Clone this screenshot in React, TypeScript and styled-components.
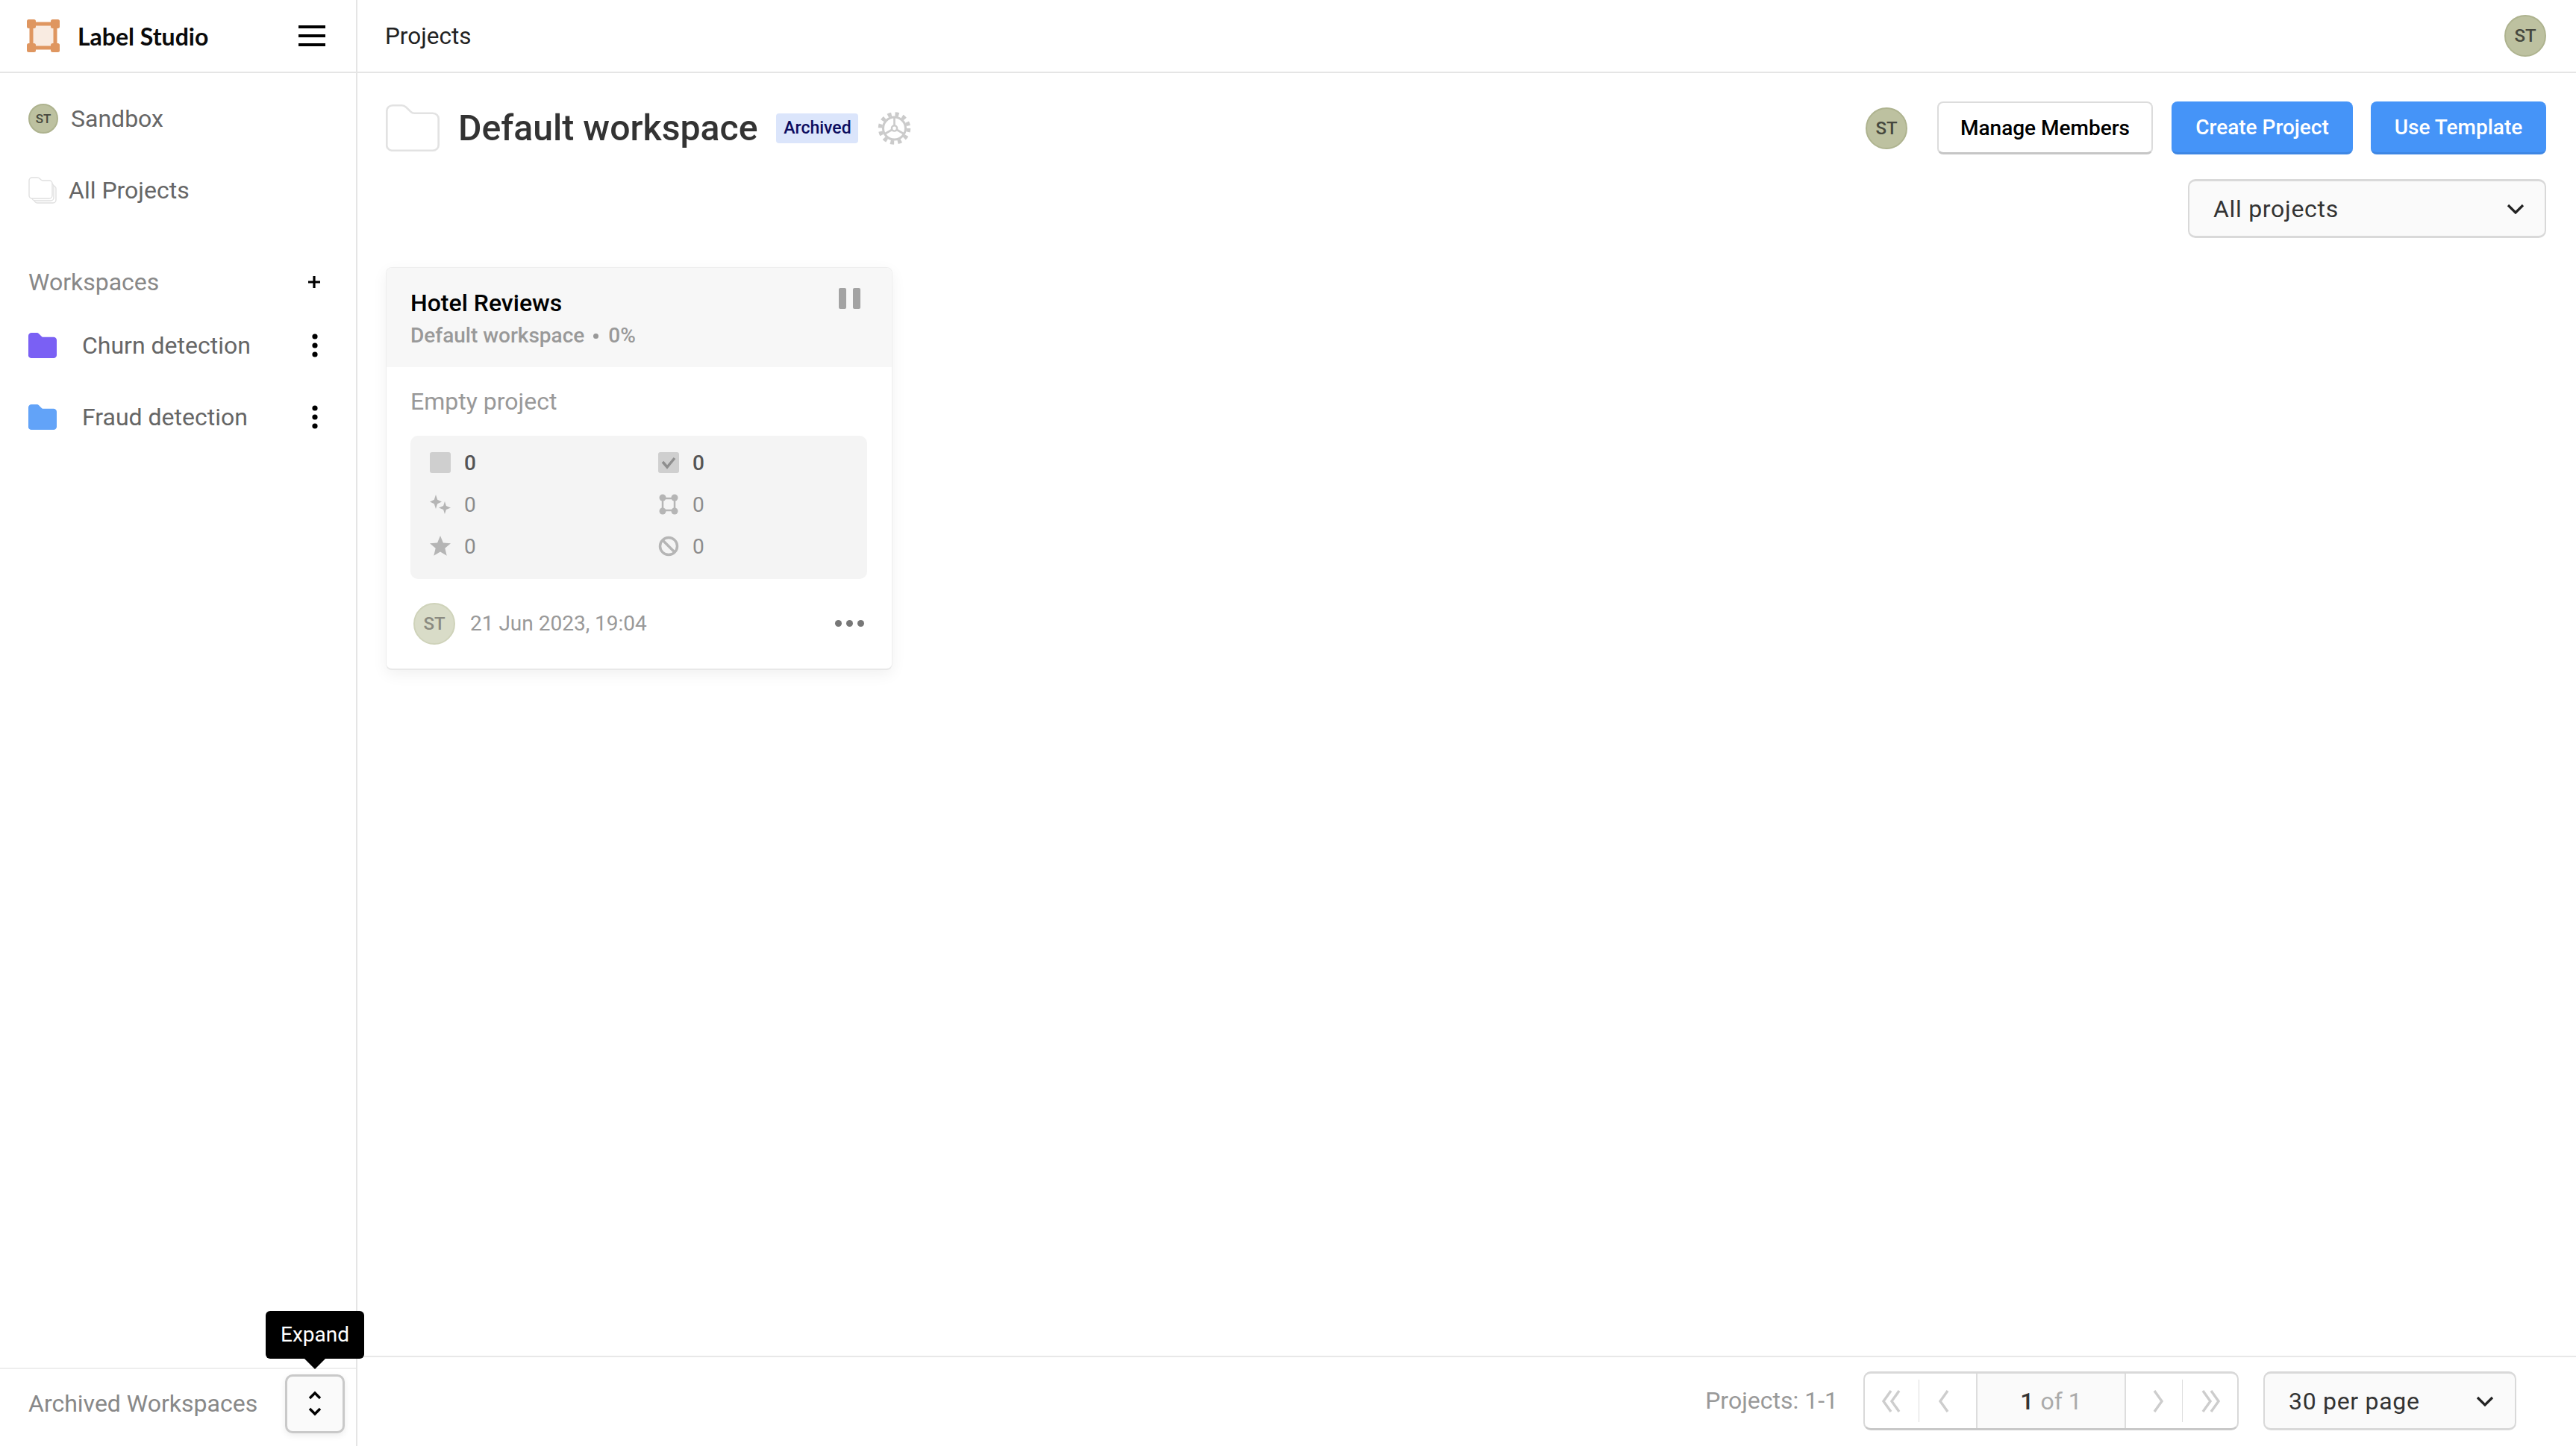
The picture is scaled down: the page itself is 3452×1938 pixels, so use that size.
import React from "react";
import styled, { createGlobalStyle } from "styled-components";

const Global = createGlobalStyle`
  html, body { margin: 0; padding: 0; height: 100%; background: #fff; overflow: hidden; }
  * { box-sizing: border-box; }
  body { font-family: Roboto, "Liberation Sans", sans-serif; color: #333; }
`;

const Page = styled.div`display: flex; flex-direction: column; height: 100vh;`;
const TopBar = styled.header`display: flex; height: 98px; border-bottom: 2px solid #e5e5e5; flex: none;`;
const Brand = styled.div`
  width: 479px; flex: none; display: flex; align-items: center; padding: 0 41px 0 36px;
  border-right: 2px solid #e5e5e5;
`;
const BrandName = styled.span`
  margin-left: 24px; flex: 1; font-family: Lato, Inter, sans-serif; font-weight: 700; font-size: 32px; color: #0a0a0a;
`;
const Burger = styled.span`display: flex; flex-direction: column; justify-content: space-between; width: 36px; height: 28px;`;
const BurgerBar = styled.i`display: block; height: 4px; background: #000;`;
const Crumbs = styled.div`flex: 1; display: flex; align-items: center; justify-content: space-between; padding: 0 40px 0 37px;`;
const Crumb = styled.span`font-size: 31.500px; color: #222;`;
const AvatarCircle = styled.span<{ $size: number; $font: number; $faded?: boolean }>`
  display: inline-flex; align-items: center; justify-content: center; flex: none; border-radius: 50%;
  width: ${p => p.$size}px; height: ${p => p.$size}px; font-size: ${p => p.$font}px; font-weight: 500;
  background: ${p => (p.$faded ? "#d9dcc8" : "#bdc1a0")}; border: 2px solid ${p => (p.$faded ? "#cfd3ba" : "#aeb38f")};
  color: ${p => (p.$faded ? "#8a8a80" : "#46483e")};
`;

const Body = styled.div`flex: 1; display: flex; min-height: 0;`;
const Sidebar = styled.aside`
  width: 479px; flex: none; display: flex; flex-direction: column; border-right: 2px solid #e5e5e5;
`;
const SideNav = styled.nav`flex: 1; padding-top: 13px;`;
const SideRow = styled.div<{ $gap: number }>`
  display: flex; align-items: center; height: 96px; padding: 0 51px 0 38px; gap: ${p => p.$gap}px;
  font-size: 32px; color: #666;
`;
const SideLabel = styled.span`flex: 1;`;
const SideHeading = styled.div`
  display: flex; align-items: center; justify-content: space-between; height: 75px; margin-top: 37px;
  padding: 0 47px 0 38px; font-size: 32px; color: #888;
`;
const SideFooter = styled.div`
  display: flex; align-items: center; justify-content: space-between; height: 105px; flex: none;
  padding: 8px 15px 19px 38px; border-top: 2px solid #eee; font-size: 32px; color: #888;
`;
const ExpandWrap = styled.div`position: relative;`;
const ExpandButton = styled.div`
  width: 80px; height: 79px; display: flex; align-items: center; justify-content: center;
  background: #fafafa; border: 3px solid #c9c9c9; border-radius: 10px; box-shadow: 0 3px 8px rgba(0,0,0,.08);
`;
const Tooltip = styled.div`
  position: absolute; left: -26px; top: -85px; width: 132px; height: 64px; background: #000; color: #fff;
  border-radius: 6px; font-size: 28px; display: flex; align-items: center; justify-content: center; z-index: 3;
  &::after {
    content: ""; position: absolute; left: 50%; bottom: -14px; margin-left: -15px;
    border-left: 15px solid transparent; border-right: 15px solid transparent; border-top: 15px solid #000;
  }
`;

const Main = styled.main`flex: 1; display: flex; flex-direction: column; min-width: 0;`;
const Content = styled.div`flex: 1; padding: 38px 40px 0 38px;`;
const HeadRow = styled.div`display: flex; align-items: center; height: 71px;`;
const Title = styled.h1`margin: 0 0 0 25px; font-size: 48.200px; font-weight: 500; color: #333;`;
const Badge = styled.span`
  margin-left: 25px; height: 40px; width: 110px; display: flex; align-items: center; justify-content: center;
  background: #dbe5fb; border-radius: 4px; color: #0b0b5e; font-size: 23px; font-weight: 500;
`;
const GearWrap = styled.span`margin-left: 26px; display: flex;`;
const HeadActions = styled.div`margin-left: auto; display: flex; align-items: center;`;
const Button = styled.button<{ $primary?: boolean; $w: number; $ml: number }>`
  width: ${p => p.$w}px; height: 71px; margin-left: ${p => p.$ml}px; border-radius: 8px; padding: 0;
  font-family: inherit; font-size: 28px; font-weight: 500;
  background: ${p => (p.$primary ? "#4594f8" : "#fff")}; color: ${p => (p.$primary ? "#fff" : "#000")};
  border: ${p => (p.$primary ? "none" : "2px solid #dcdcdc")};
  border-bottom: 3px solid ${p => (p.$primary ? "#3e87e4" : "#c6c6c6")};
`;
const FilterRow = styled.div`display: flex; justify-content: flex-end; margin-top: 33px;`;
const SelectBox = styled.div<{ $w: number; $pad: number }>`
  width: ${p => p.$w}px; height: 79px; display: flex; align-items: center; justify-content: space-between;
  padding: 0 ${p => p.$pad}px 0 32px; background: #fafafa; border: 2px solid #d9d9d9; border-top-width: 3px; border-bottom-width: 3px;
  border-radius: 10px; font-size: 32px; color: #333; letter-spacing: .7px;
`;

const Card = styled.article`
  width: 679px; height: 540px; margin-top: 39px; border: 1px solid #eee; border-bottom: 2px solid #e8e8e8; border-radius: 8px;
  background: #fff; box-shadow: 0 6px 20px rgba(0,0,0,.06); overflow: hidden;
`;
const CardHead = styled.div`
  height: 133px; background: #f7f7f7; padding: 0 42px 0 32px; display: flex; justify-content: space-between;
`;
const CardTitles = styled.div`padding-top: 29px;`;
const CardTitle = styled.div`font-size: 32px; font-weight: 500; color: #000; line-height: 36px;`;
const CardSub = styled.div`
  margin-top: 9px; font-size: 28px; font-weight: 500; color: #999; line-height: 34px; display: flex; align-items: center;
`;
const Dot = styled.i`width: 7px; height: 7px; border-radius: 50%; background: #999; margin: 0 13px 0 12px;`;
const PauseIcon = styled.div`display: flex; gap: 9px; padding-top: 27px;`;
const PauseBar = styled.i`display: block; width: 10px; height: 28px; border-radius: 2px; background: #a3a3a3;`;
const CardBody = styled.div`padding: 23px 33px 0 32px;`;
const EmptyLabel = styled.div`font-size: 32px; line-height: 46px; color: #999;`;
const StatsBox = styled.div`
  margin-top: 23px; height: 192px; padding: 8px 26px 16px; background: #f4f4f4; border-radius: 10px;
  display: grid; grid-template-columns: 306px 1fr; grid-auto-rows: 56px;
`;
const Stat = styled.div<{ $strong?: boolean }>`
  display: flex; align-items: center; gap: 18px; font-size: 28px;
  font-weight: ${p => (p.$strong ? 500 : 400)}; color: ${p => (p.$strong ? "#555" : "#8c8c8c")};
`;
const CardFoot = styled.div`display: flex; align-items: center; margin-top: 32px; padding-left: 4px; height: 55px;`;
const DateText = styled.span`margin-left: 20px; flex: 1; font-size: 28px; color: #999;`;
const MoreDots = styled.div`display: flex; gap: 6px; margin-right: 4px;`;
const MoreDot = styled.i`display: block; width: 9px; height: 9px; border-radius: 50%; background: #777;`;

const MainFoot = styled.footer`
  flex: none; height: 121px; border-top: 2px solid #e8e8e8; display: flex; align-items: flex-start; justify-content: flex-end;
  padding: 19px 80px 0 0;
`;
const ProjectsCount = styled.span`line-height: 79px; font-size: 32px; color: #999; margin-right: 34px;`;
const Pager = styled.div`
  width: 503px; height: 79px; display: flex; border: 2px solid #d9d9d9; border-top-width: 3px; border-bottom: 3px solid #c8c8c8; border-radius: 10px; overflow: hidden;
`;
const PagerBtn = styled.div<{ $w: number; $divider?: boolean }>`
  position: relative; width: ${p => p.$w}px; display: flex; align-items: center; justify-content: center; flex: none;
  ${p => p.$divider && `&::after { content: ""; position: absolute; right: 0; top: 8px; bottom: 8px; width: 1px; background: #ddd; }`}
`;
const PagerPage = styled.div`
  flex: 1; display: flex; align-items: center; justify-content: center; gap: 9px; background: #fafafa; font-size: 32px; color: #aaa;
  border-left: 2px solid #ddd; border-right: 2px solid #ddd;
`;
const PagerCurrent = styled.b`font-weight: 500; color: #333;`;
const PerPage = styled.div`margin-left: 33px;`;

const Logo = () => (
  <svg width="44" height="44" viewBox="0 0 44 44">
    <rect x="6" y="6" width="32" height="32" fill="#f9ebe1" stroke="#df9660" strokeWidth="5" />
    {[[0, 0], [32, 0], [0, 32], [32, 32]].map(([x, y]) => (
      <rect key={`${x}-${y}`} x={x} y={y} width="12" height="12" rx="2.500" fill="#df9660" />
    ))}
  </svg>
);
const FOLDER = "M3 4.500A3.500 3.500 0 0 1 6.500 1h5.700c1 0 1.800.4 2.500 1.100l3.100 3.100c.5.5 1.200.8 2 .8h11.200a3.500 3.500 0 0 1 3.500 3.500v17a3.500 3.500 0 0 1-3.500 3.500h-25A3.500 3.500 0 0 1 3 26z";
const FilledFolder = ({ color }: { color: string }) => (
  <svg width="38" height="34" viewBox="3 1 31.500 29" preserveAspectRatio="none"><path d={FOLDER} fill={color} /></svg>
);
const BigFolder = () => (
  <svg width="72" height="63" viewBox="2.400 .4 32.700 30.200" preserveAspectRatio="none">
    <path d={FOLDER} fill="#fff" stroke="#e2e2e2" strokeWidth="1.200" />
  </svg>
);
const StackFolder = () => (
  <svg width="38" height="36" viewBox="0 0 38 36" fill="#fff" stroke="#e0e0e0" strokeWidth="1.400">
    <rect x="8" y="12" width="29" height="23" rx="4" />
    <rect x="5" y="9" width="29" height="23" rx="4" />
    <path d="M1 5a4 4 0 0 1 4-4h7c1.500 0 2.500.7 3.400 1.600C16.500 3.800 17.500 5 19 5h9a4 4 0 0 1 4 4v16a4 4 0 0 1-4 4H5a4 4 0 0 1-4-4z" />
  </svg>
);
const Plus = () => (
  <svg width="18" height="18" viewBox="0 0 18 18"><path d="M9 1v16M1 9h16" stroke="#000" strokeWidth="3.200" /></svg>
);
const Kebab = () => (
  <svg width="8" height="32" viewBox="0 0 8 32" fill="#000"><circle cx="4" cy="4" r="3.600" /><circle cx="4" cy="16" r="3.600" /><circle cx="4" cy="28" r="3.600" /></svg>
);
const Gear = () => (
  <svg width="45" height="44" viewBox="0 0 45 44" fill="none" stroke="#cbcbcb">
    <circle cx="22.500" cy="22" r="15" strokeWidth="3" />
    <circle cx="22.500" cy="22" r="19" strokeWidth="5.500" strokeDasharray="5 5" />
    <path d="M22.500 7v15M22.500 22 9.500 29.500M22.500 22l13 7.500" strokeWidth="2.600" />
    <circle cx="22.500" cy="22" r="3.600" fill="#fff" strokeWidth="2.400" />
  </svg>
);
const Chevron = () => (
  <svg width="24" height="14" viewBox="0 0 24 14" fill="none"><path d="M2 2l10 10L22 2" stroke="#222" strokeWidth="3.200" /></svg>
);
const UpDown = () => (
  <svg width="18" height="34" viewBox="0 0 18 34" fill="none" stroke="#000" strokeWidth="3.400"><path d="M2 10l7-7 7 7M2 24l7 7 7-7" /></svg>
);
const Chev = ({ d, shift }: { d: string; shift: number }) => (
  <svg width="34" height="32" viewBox="0 0 34 32" fill="none" stroke="#cdcdcd" strokeWidth="3.400" style={{ marginLeft: shift }}><path d={d} /></svg>
);
const Icon28 = ({ children }: { children: React.ReactNode }) => (
  <svg width="28" height="28" viewBox="0 0 28 28" style={{ flex: "none" }}>{children}</svg>
);
const StatIcons = {
  total: <Icon28><rect width="28" height="28" rx="3" fill="#cfcfcf" /></Icon28>,
  done: <Icon28><rect width="28" height="28" rx="3" fill="#cfcfcf" /><path d="M6 13l6 7 10-12" fill="none" stroke="#8f8f8f" strokeWidth="3.500" /></Icon28>,
  spark: <Icon28><path d="M8 1l2.200 6.800L16 10.500l-5.800 2.700L8 20l-2.200-6.800L0 10.500l5.800-2.700zM20 10l1.900 6.100L28 18.500l-6.100 2.400L20 27l-1.900-6.100-6.100-2.400 6.100-2.400z" fill="#b5b5b5" /></Icon28>,
  frame: <Icon28><rect x="6" y="6" width="16" height="16" fill="none" stroke="#b5b5b5" strokeWidth="2.500" /><g fill="#b5b5b5"><circle cx="6" cy="5" r="4.500" /><circle cx="22" cy="5" r="4.500" /><circle cx="6" cy="23" r="4.500" /><circle cx="22" cy="23" r="4.500" /></g></Icon28>,
  star: <Icon28><path d="M14 0l3.900 9.400 10.100.8-7.700 6.600 2.400 9.900L14 21.400l-8.700 5.300 2.400-9.900L0 10.200l10.100-.8z" fill="#b5b5b5" /></Icon28>,
  skip: <Icon28><circle cx="14" cy="14" r="11.500" fill="none" stroke="#b5b5b5" strokeWidth="3.500" /><path d="M6 6l16 16" stroke="#b5b5b5" strokeWidth="3.500" /></Icon28>,
};

export default function App() {
  return (
    <Page>
      <Global />
      <TopBar>
        <Brand>
          <Logo />
          <BrandName>Label Studio</BrandName>
          <Burger><BurgerBar /><BurgerBar /><BurgerBar /></Burger>
        </Brand>
        <Crumbs>
          <Crumb>Projects</Crumb>
          <AvatarCircle $size={56} $font={24}>ST</AvatarCircle>
        </Crumbs>
      </TopBar>
      <Body>
        <Sidebar>
          <SideNav>
            <SideRow $gap={17}>
              <AvatarCircle $size={40} $font={17}>ST</AvatarCircle>
              <SideLabel>Sandbox</SideLabel>
            </SideRow>
            <SideRow $gap={16}>
              <StackFolder />
              <SideLabel>All Projects</SideLabel>
            </SideRow>
            <SideHeading>Workspaces<Plus /></SideHeading>
            <SideRow $gap={34}>
              <FilledFolder color="#7a60f4" />
              <SideLabel>Churn detection</SideLabel>
              <Kebab />
            </SideRow>
            <SideRow $gap={34}>
              <FilledFolder color="#62a3f8" />
              <SideLabel>Fraud detection</SideLabel>
              <Kebab />
            </SideRow>
          </SideNav>
          <SideFooter>
            Archived Workspaces
            <ExpandWrap>
              <Tooltip>Expand</Tooltip>
              <ExpandButton><UpDown /></ExpandButton>
            </ExpandWrap>
          </SideFooter>
        </Sidebar>
        <Main>
          <Content>
            <HeadRow>
              <BigFolder />
              <Title>Default workspace</Title>
              <Badge>Archived</Badge>
              <GearWrap><Gear /></GearWrap>
              <HeadActions>
                <AvatarCircle $size={56} $font={24}>ST</AvatarCircle>
                <Button $w={289} $ml={40}>Manage Members</Button>
                <Button $primary $w={243} $ml={25}>Create Project</Button>
                <Button $primary $w={235} $ml={24}>Use Template</Button>
              </HeadActions>
            </HeadRow>
            <FilterRow>
              <SelectBox $w={480} $pad={27}>All projects<Chevron /></SelectBox>
            </FilterRow>
            <Card>
              <CardHead>
                <CardTitles>
                  <CardTitle>Hotel Reviews</CardTitle>
                  <CardSub>Default workspace<Dot />0%</CardSub>
                </CardTitles>
                <PauseIcon><PauseBar /><PauseBar /></PauseIcon>
              </CardHead>
              <CardBody>
                <EmptyLabel>Empty project</EmptyLabel>
                <StatsBox>
                  <Stat $strong>{StatIcons.total}0</Stat>
                  <Stat $strong>{StatIcons.done}0</Stat>
                  <Stat>{StatIcons.spark}0</Stat>
                  <Stat>{StatIcons.frame}0</Stat>
                  <Stat>{StatIcons.star}0</Stat>
                  <Stat>{StatIcons.skip}0</Stat>
                </StatsBox>
                <CardFoot>
                  <AvatarCircle $size={56} $font={24} $faded>ST</AvatarCircle>
                  <DateText>21 Jun 2023, 19:04</DateText>
                  <MoreDots><MoreDot /><MoreDot /><MoreDot /></MoreDots>
                </CardFoot>
              </CardBody>
            </Card>
          </Content>
          <MainFoot>
            <ProjectsCount>Projects: 1-1</ProjectsCount>
            <Pager>
              <PagerBtn $w={73} $divider><Chev shift={-2} d="M16 2L6 16l10 14M27 2L17 16l10 14" /></PagerBtn>
              <PagerBtn $w={76}><Chev shift={-12} d="M23 2L13 16l10 14" /></PagerBtn>
              <PagerPage><PagerCurrent>1</PagerCurrent> of 1</PagerPage>
              <PagerBtn $w={76} $divider><Chev shift={12} d="M11 2l10 14-10 14" /></PagerBtn>
              <PagerBtn $w={73}><Chev shift={0} d="M7 2l10 14L7 30M18 2l10 14-10 14" /></PagerBtn>
            </Pager>
            <PerPage>
              <SelectBox $w={339} $pad={28}>30 per page<Chevron /></SelectBox>
            </PerPage>
          </MainFoot>
        </Main>
      </Body>
    </Page>
  );
}
